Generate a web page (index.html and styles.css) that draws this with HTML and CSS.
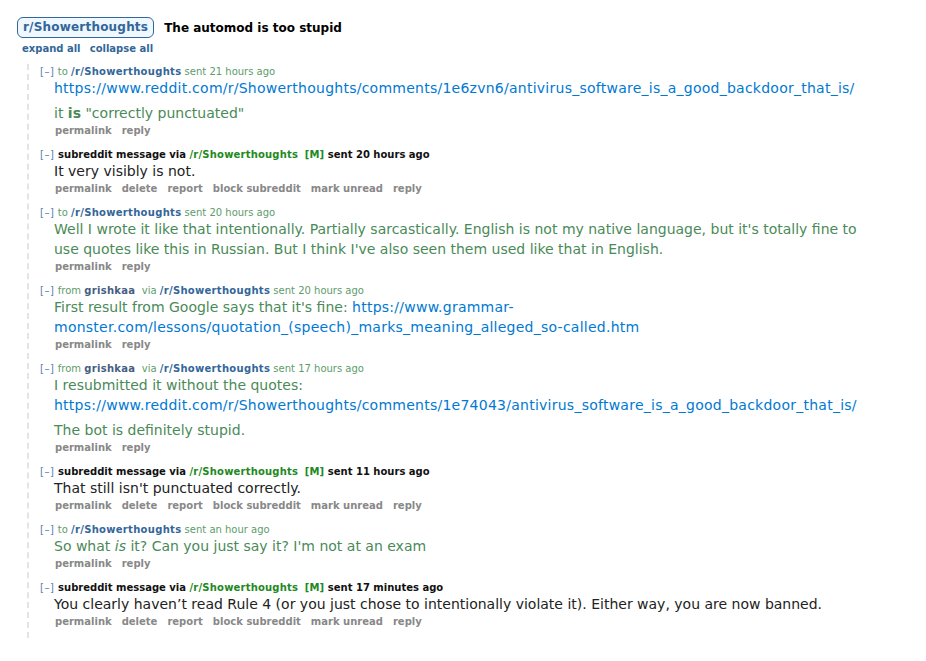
FILE: index.html
```html
<!DOCTYPE html>
<html lang="en">
<head>
    <meta charset="UTF-8">
    <title>The automod is too stupid</title>
    <link rel="stylesheet" href="styles.css">
</head>
<body>
    <div class="thread-head">
        <a class="sr-pill" href="#">r/Showerthoughts</a>
        <span class="subject">The automod is too stupid</span>
    </div>
    <div class="expand-links">
        <a href="#">expand all</a>
        <a href="#">collapse all</a>
    </div>

    <div class="thread">
        <div class="message sent">
            <p class="tagline"><a class="expand" href="#">[–]</a> to <a class="sr" href="#">/r/Showerthoughts</a> sent 21 hours ago</p>
            <div class="md">
                <p><a href="#">https://www.reddit.com/r/Showerthoughts/comments/1e6zvn6/antivirus_software_is_a_good_backdoor_that_is/</a></p>
                <p>it <strong>is</strong> "correctly punctuated"</p>
            </div>
            <ul class="buttons"><li>permalink</li><li>reply</li></ul>
        </div>

        <div class="message mod">
            <p class="tagline"><a class="expand" href="#">[–]</a> subreddit message via <a class="sr" href="#">/r/Showerthoughts</a> <span class="tag">[M]</span> sent 20 hours ago</p>
            <div class="md">
                <p>It very visibly is not.</p>
            </div>
            <ul class="buttons"><li>permalink</li><li>delete</li><li>report</li><li>block subreddit</li><li>mark unread</li><li>reply</li></ul>
        </div>

        <div class="message sent">
            <p class="tagline"><a class="expand" href="#">[–]</a> to <a class="sr" href="#">/r/Showerthoughts</a> sent 20 hours ago</p>
            <div class="md">
                <p>Well I wrote it like that intentionally. Partially sarcastically. English is not my native language, but it's totally fine to use quotes like this in Russian. But I think I've also seen them used like that in English.</p>
            </div>
            <ul class="buttons"><li>permalink</li><li>reply</li></ul>
        </div>

        <div class="message sent">
            <p class="tagline"><a class="expand" href="#">[–]</a> from <a class="author" href="#">grishkaa</a> &nbsp;via <a class="sr" href="#">/r/Showerthoughts</a> sent 20 hours ago</p>
            <div class="md">
                <p>First result from Google says that it's fine: <a href="#">https://www.grammar-monster.com/lessons/quotation_(speech)_marks_meaning_alleged_so-called.htm</a></p>
            </div>
            <ul class="buttons"><li>permalink</li><li>reply</li></ul>
        </div>

        <div class="message sent">
            <p class="tagline"><a class="expand" href="#">[–]</a> from <a class="author" href="#">grishkaa</a> &nbsp;via <a class="sr" href="#">/r/Showerthoughts</a> sent 17 hours ago</p>
            <div class="md">
                <p>I resubmitted it without the quotes: <a href="#">https://www.reddit.com/r/Showerthoughts/comments/1e74043/antivirus_software_is_a_good_backdoor_that_is/</a></p>
                <p>The bot is definitely stupid.</p>
            </div>
            <ul class="buttons"><li>permalink</li><li>reply</li></ul>
        </div>

        <div class="message mod">
            <p class="tagline"><a class="expand" href="#">[–]</a> subreddit message via <a class="sr" href="#">/r/Showerthoughts</a> <span class="tag">[M]</span> sent 11 hours ago</p>
            <div class="md">
                <p>That still isn't punctuated correctly.</p>
            </div>
            <ul class="buttons"><li>permalink</li><li>delete</li><li>report</li><li>block subreddit</li><li>mark unread</li><li>reply</li></ul>
        </div>

        <div class="message sent">
            <p class="tagline"><a class="expand" href="#">[–]</a> to <a class="sr" href="#">/r/Showerthoughts</a> sent an hour ago</p>
            <div class="md">
                <p>So what <em>is</em> it? Can you just say it? I'm not at an exam</p>
            </div>
            <ul class="buttons"><li>permalink</li><li>reply</li></ul>
        </div>

        <div class="message mod">
            <p class="tagline"><a class="expand" href="#">[–]</a> subreddit message via <a class="sr" href="#">/r/Showerthoughts</a> <span class="tag">[M]</span> sent 17 minutes ago</p>
            <div class="md">
                <p>You clearly haven’t read Rule 4 (or you just chose to intentionally violate it). Either way, you are now banned.</p>
            </div>
            <ul class="buttons"><li>permalink</li><li>delete</li><li>report</li><li>block subreddit</li><li>mark unread</li><li>reply</li></ul>
        </div>
    </div>
</body>
</html>
```

FILE: styles.css
```css
* {
    margin: 0;
    padding: 0;
    box-sizing: border-box;
}
body {
    font-family: "DejaVu Sans", Verdana, sans-serif;
    font-size: 10px;
    background: #fff;
    color: #222;
    padding: 17px 0 0 17px;
}
a {
    text-decoration: none;
}
.thread-head {
    display: flex;
    align-items: center;
    gap: 10px;
}
.sr-pill {
    display: inline-block;
    font-size: 12px;
    font-weight: bold;
    color: #336699;
    background: #eff7ff;
    border: 1px solid #336699;
    border-radius: 6px;
    padding: 2px 5px 2px 5px;
    line-height: 15px;
    letter-spacing: 0.2px;
}
.subject {
    font-size: 12px;
    font-weight: bold;
    color: #000;
}
.expand-links {
    margin: 4px 0 0 5px;
    line-height: 14px;
}
.expand-links a {
    font-weight: bold;
    color: #336699;
    margin-right: 6px;
}
.thread {
    margin: 8px 0 0 10px;
    border-left: 2px dashed #e4e4e4;
    padding: 2px 0 8px 10px;
    width: 880px;
}
.message {
    margin-bottom: 10px;
}
.message:last-child {
    margin-bottom: 0;
}
.tagline {
    font-size: 10px;
    line-height: 12px;
    color: #5e9c6b;
}
.tagline .expand {
    color: #5b81b0;
    letter-spacing: 0.6px;
    padding-left: 1px;
}
.tagline .sr,
.tagline .author {
    font-weight: bold;
    color: #336699;
    letter-spacing: 0.3px;
}
.tagline .author {
    color: #465e82;
}
.mod .tagline {
    font-weight: bold;
    color: #111;
}
.mod .tagline .expand {
    font-weight: normal;
}
.mod .tagline .sr,
.mod .tagline .tag {
    color: #228822;
    letter-spacing: 0.2px;
}
.mod .tagline .tag {
    margin-left: 3px;
}
.md {
    font-size: 14px;
    line-height: 20px;
    max-width: 60em;
    padding-left: 15px;
    color: #222;
}
.md p + p {
    margin-top: 5px;
}
.sent .md {
    color: #4a8a57;
}
.md a {
    color: #0079d3;
    letter-spacing: 0.25px;
}
.buttons {
    list-style: none;
    display: flex;
    gap: 10px;
    padding: 1px 0 1px 16px;
    line-height: 14px;
}
.buttons li {
    font-weight: bold;
    color: #888;
}
```
